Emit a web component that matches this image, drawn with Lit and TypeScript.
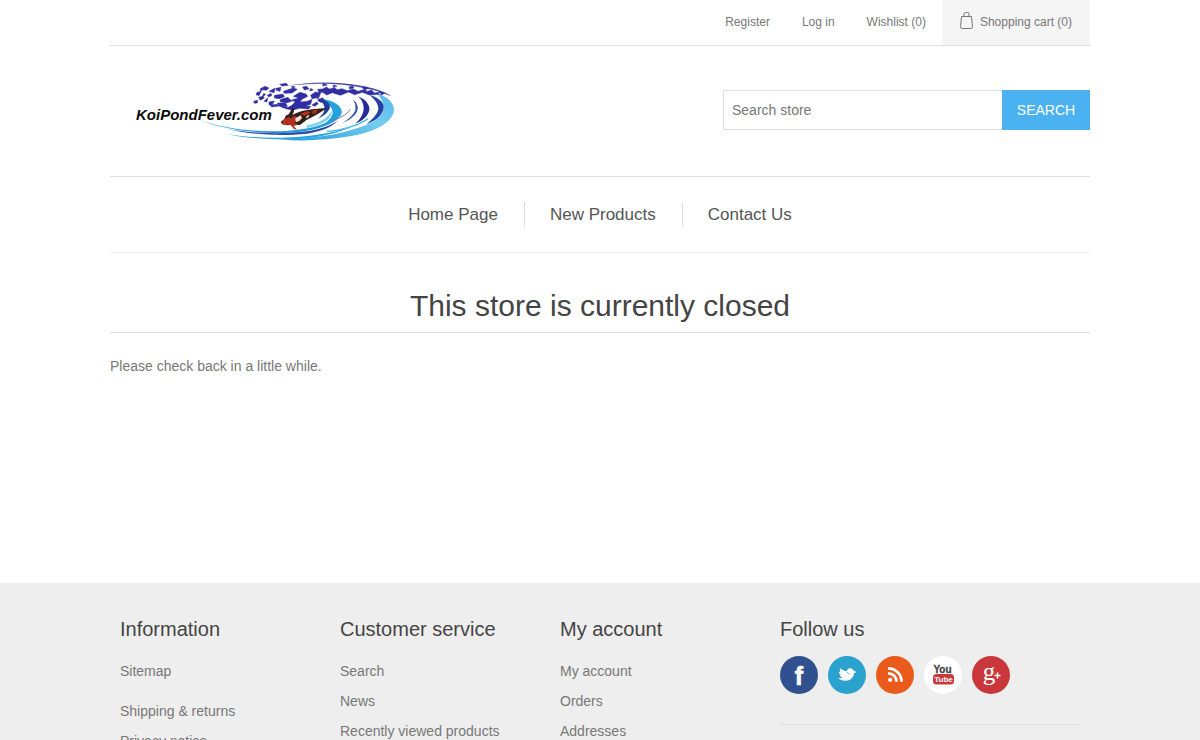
import { LitElement, html, svg, css } from "lit";
import { customElement } from "lit/decorators.js";

const columns = [
  { title: "Information", links: ["Sitemap", "Shipping & returns", "Privacy notice"], spaced: true },
  { title: "Customer service", links: ["Search", "News", "Recently viewed products"], spaced: false },
  { title: "My account", links: ["My account", "Orders", "Addresses"], spaced: false },
];

const social = [
  { name: "Facebook", color: "#30508f", art: svg`<text x="19" y="29" text-anchor="middle" font-family="Liberation Sans" font-weight="700" font-size="25" fill="#fff" stroke="#fff" stroke-width=".6">f</text>` },
  { name: "Twitter", color: "#2ba1cd", art: svg`<path fill="#fff" d="M10 22.300C12 22.500 13.500 22 14.600 21.200C13 20.900 12 20 11.600 18.900L13.200 18.800C11.500 18 10.800 17 10.900 15.700L12.600 16.100C11.700 15 11.600 13.600 12.300 12.300C14.200 14 16.400 14.900 18.800 15.300C19 13.200 20.600 11.800 22.700 12.200C24 12.400 24.800 13.200 25.300 14.300L28.400 16L26.100 17.200C25.600 21.600 22.300 24.600 17.700 24.700C14.700 24.800 12 24 10 22.300Z"/><path stroke="#2ba1cd" stroke-width=".8" fill="none" d="M18.600 15.800L21 18.300"/>` },
  { name: "RSS", color: "#ea5b1b", art: svg`<circle cx="14.200" cy="23.800" r="2.100" fill="#fff"/><path fill="none" stroke="#fff" stroke-width="2.700" d="M12.100 17.300a8.200 8.200 0 0 1 8.400 8.500M12.100 12.400a13.200 13.200 0 0 1 13.400 13.400"/>` },
  { name: "YouTube", color: "#fff", art: svg`<text x="18.500" y="16.500" text-anchor="middle" font-family="Liberation Sans" font-weight="700" font-size="10" fill="#444" stroke="#444" stroke-width=".3">You</text><rect x="9" y="18" width="21" height="10.500" rx="3.500" fill="#c9383c"/><text x="19.500" y="26.200" text-anchor="middle" font-family="Liberation Sans" font-weight="700" font-size="8" fill="#fff">Tube</text>` },
  { name: "Google+", color: "#c9373b", art: svg`<text x="17" y="23.500" text-anchor="middle" font-family="Liberation Serif" font-size="25" fill="#fff">g</text><path stroke="#fff" stroke-width="1.500" d="M22.500 19.500h6M25.500 16.500v6"/>` },
];

const logo = html`
  <svg class="logo" viewBox="-30 0 900 240" role="img" aria-label="KoiPondFever.com">
    <defs>
      <linearGradient id="sweep" x1="0" x2="1">
        <stop offset="0" stop-color="#5cc4ea" /><stop offset=".5" stop-color="#1b8fd0" /><stop offset="1" stop-color="#25a4dc" />
      </linearGradient>
      <linearGradient id="crest" x1="0" x2="1" y1="1" y2="0">
        <stop offset="0" stop-color="#279bd6" /><stop offset=".6" stop-color="#74cdf2" /><stop offset="1" stop-color="#57b9ea" />
      </linearGradient>
    </defs>
    <path fill="url(#crest)" d="M770 70C802 80 822 98 822 120C818 164 752 188 690 199C620 211 550 214 482 209C550 207 610 200 655 190C715 176 768 158 785 132C797 110 788 88 770 70Z" />
    <path fill="#2aa4df" d="M318 192C390 204 470 205 530 201C600 196 660 184 704 166C664 188 600 203 530 208C450 211 370 203 318 192Z" />
    <path fill="#2c4ca6" d="M320 177C400 191 490 193 560 184C600 178 635 166 655 150C635 172 605 184 560 191C480 199 390 194 320 177Z" />
    <path fill="url(#sweep)" d="M236 149C290 168 370 183 450 184C520 185 580 175 616 158C648 138 648 106 596 88C648 88 678 117 660 139C640 168 570 187 490 189C390 190 290 173 236 149Z" />
    <path fill="#7bcdf0" d="M560 166C598 160 626 143 634 122C640 143 610 164 560 174Z" />
    <path fill="#1c3b9b" d="M586 84C618 86 636 102 628 118C620 132 607 140 594 146C608 134 616 124 613 110C611 98 602 92 586 84Z" />
    <path fill="#24289b" d="M714 79C739 89 754 108 746 127C740 142 726 153 706 161C720 149 730 133 731 117C731 101 726 90 714 79Z" />
    <path fill="#24419f" d="M748 75C784 84 800 105 786 128C778 143 762 153 740 162C756 149 772 134 775 118C776 102 764 87 748 75Z" />
    <path fill="#4058ae" d="M700 89C716 103 718 119 705 134C696 145 681 154 665 159C685 148 701 135 706 119Q708 103 700 89Z" />
    <path fill="none" stroke="#7a72b5" stroke-width="3" d="M690 119C680 133 662 144 638 151" />
    <path fill="none" stroke="#58bce8" stroke-width="4" d="M620 185C666 181 716 166 744 146" />
    <path fill="#4b4bab" d="M488 49C570 34 650 34 710 45C761 53 798 65 814 79C776 62 736 53 690 47C620 38 554 41 488 49Z" />
    <g fill="#302da2" stroke="#302da2" stroke-width="1.500" stroke-linejoin="round">
      <path d="M421 56L435 49L447 54L439 61L428 59L421 66ZM447 64L466 54L462 68ZM479 43L499 40L504 46L486 48ZM468 55L483 52L480 64L469 61ZM490 64L520 54L532 58L516 69L493 70ZM517 48L526 51L515 54ZM548 51L560 49L567 57L553 60ZM411 67L423 65L417 77L408 74ZM431 70L437 74L427 80ZM401 94L413 91L412 99L403 100ZM416 82L429 78L433 84L421 91ZM432 94L443 83L441 96ZM447 96L463 93L457 104L447 105ZM464 76L489 72L493 80L478 86L463 84ZM482 88L504 82L515 94L499 99L480 95ZM472 99L496 99L502 107L480 110ZM451 105L473 103L478 108L455 111Z" />
      <path d="M520 79L540 67L558 72L563 79L546 88L540 96L562 94L576 88L572 103L556 109L572 109L566 117L540 115L518 120L496 116L516 106L526 95L512 91L536 84ZM572 76L586 66L602 69L597 82L576 86ZM572 55L580 60L569 63ZM593 58L608 57L619 51L628 57L644 53L652 59L666 56L682 62L700 57L714 64L738 57L739 65L754 60L764 69L779 66L776 73L748 75L727 67L704 74L686 66L661 76L637 68L620 75L608 67L597 68ZM576 105L590 96L595 101L584 109ZM593 92L606 83L613 88L605 98ZM609 40L622 45L608 48ZM640 45L651 49L639 52ZM687 51L698 48L702 54L689 57ZM727 51L741 51L747 56L730 57ZM778 64L794 70L784 75Z" />
      <path d="M442 76L453 70L455 77L446 81ZM486 108L503 110L498 115L486 113Z" />
    </g>
    <path fill="#342019" d="M516 137C532 123 564 118 622 114L603 126L583 138L559 150L540 165L524 164L503 166L487 163L482 156L493 147L497 137L506 133L512 123L517 113L523 117L521 127Z" />
    <path fill="#b6301e" d="M486 153C497 144 510 138 525 137L533 145L522 157L534 164L521 168L531 179L522 177L512 165L490 163ZM541 131L563 123L571 128L553 138ZM577 123L593 118L589 128L577 132Z" />
    <path fill="#eee2d1" d="M526 145L542 136L546 144L538 153L527 157ZM561 137L568 134L565 142L557 146Z" />
    <path fill="#2b2522" d="M506 141L521 132L515 146ZM548 147L566 144L547 158Z" />
    <text x="48" y="150" font-family="Liberation Sans" font-weight="700" font-style="italic" font-size="45" fill="#0b0b0b">KoiPondFever.com</text>
  </svg>`;

@customElement("app-root")
export class AppRoot extends LitElement {
  static styles = css`
    :host { display: block; font: 14px/20px "Liberation Sans", Arial, sans-serif; color: #777; background: #fff; }
    * { box-sizing: border-box; }
    ul { list-style: none; margin: 0; padding: 0; }
    a { color: inherit; text-decoration: none; }
    svg { display: block; }
    .container { max-width: 980px; margin: 0 auto; }
    .upper { display: flex; justify-content: flex-end; border-bottom: 1px solid #ddd; font-size: 12px; line-height: 45px; }
    .account { display: flex; gap: 32px; padding-right: 16px; }
    .cart { display: flex; align-items: center; gap: 7px; padding: 0 18px; background: #f5f5f5; }
    .cart svg { width: 13px; height: 17px; margin-bottom: 4px; }
    .lower { display: flex; justify-content: space-between; align-items: center; padding: 24px 0 26px; border-bottom: 1px solid #ddd; }
    .logo { width: 300px; height: 80px; }
    .search { display: flex; }
    .search input { width: 279px; height: 40px; border: 1px solid #ddd; border-right: 0; padding: 0 8px; font: inherit; color: #777; background: #fff; border-radius: 0; }
    .search input::placeholder { color: #777; opacity: 1; }
    .search button { width: 88px; height: 40px; border: 0; padding: 0; background: #4ab2f1; color: #fff; font: inherit; text-transform: uppercase; }
    .menu { display: flex; justify-content: center; padding: 25px 0; border-bottom: 1px solid #eee; font-size: 17px; line-height: 25px; color: #555; }
    .menu li { padding: 0 26px 0 25px; }
    .menu li:last-child { padding-right: 25px; }
    .menu li + li { border-left: 1px solid #ddd; }
    main { min-height: 330px; padding-top: 35px; }
    h1 { margin: 0 0 23px; padding-bottom: 8px; border-bottom: 1px solid #ddd; font-size: 30px; line-height: 36px; font-weight: 400; color: #444; text-align: center; }
    p { margin: 0; }
    footer { background: #eee; padding: 35px 0 40px; }
    .blocks { display: grid; grid-template-columns: 200px 200px 200px 1fr; column-gap: 20px; padding: 0 10px; }
    h2 { margin: 0 0 16px; font-size: 20px; line-height: 22px; font-weight: 400; color: #444; }
    .links { line-height: 30px; }
    .spaced li:first-child { margin-bottom: 10px; }
    .social { display: flex; gap: 10px; padding-bottom: 30px; border-bottom: 1px solid #ddd; }
    .social svg { width: 38px; height: 38px; }
    @media (max-width: 980px) {
      .lower { flex-direction: column; gap: 16px; }
      .blocks { grid-template-columns: 1fr 1fr; row-gap: 32px; }
    }
  `;

  render() {
    return html`
      <header class="container">
        <div class="upper">
          <ul class="account">
            <li><a href="#">Register</a></li>
            <li><a href="#">Log in</a></li>
            <li><a href="#">Wishlist (0)</a></li>
          </ul>
          <a class="cart" href="#">
            <svg viewBox="0 0 13 17" fill="none" stroke="#777" aria-hidden="true">
              <path d="M1.500 4.500H11.500L12.500 14.500Q12.500 16.500 11 16.500H2Q.5 16.500 .5 14.500ZM4 4.500V2Q4 .5 5.500 .5H7.500Q9 .5 9 2V4.500" />
            </svg>
            <span>Shopping cart (0)</span>
          </a>
        </div>
        <div class="lower">
          <a href="#">${logo}</a>
          <form class="search" @submit=${(e: Event) => e.preventDefault()}>
            <input type="text" placeholder="Search store" aria-label="Search store" />
            <button type="submit">Search</button>
          </form>
        </div>
        <nav>
          <ul class="menu">
            ${["Home Page", "New Products", "Contact Us"].map((t) => html`<li><a href="#">${t}</a></li>`)}
          </ul>
        </nav>
      </header>
      <main class="container">
        <h1>This store is currently closed</h1>
        <p>Please check back in a little while.</p>
      </main>
      <footer>
        <div class="container blocks">
          ${columns.map((c) => html`
            <section>
              <h2>${c.title}</h2>
              <ul class="links ${c.spaced ? "spaced" : ""}">
                ${c.links.map((l) => html`<li><a href="#">${l}</a></li>`)}
              </ul>
            </section>`)}
          <section>
            <h2>Follow us</h2>
            <ul class="social">
              ${social.map((s) => html`<li><a href="#" aria-label=${s.name}>
                <svg viewBox="0 0 38 38" aria-hidden="true"><circle cx="19" cy="19" r="19" fill=${s.color} />${s.art}</svg>
              </a></li>`)}
            </ul>
          </section>
        </div>
      </footer>
    `;
  }
}
